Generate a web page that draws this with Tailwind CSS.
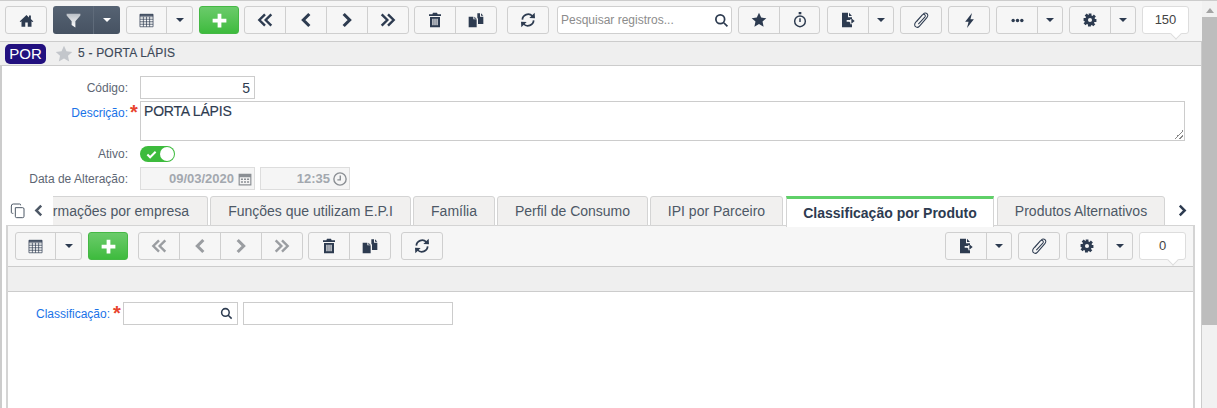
<!DOCTYPE html>
<html lang="pt-BR">
<head>
  <meta charset="UTF-8" />
  <title>Porta Lápis</title>
  <script src="https://cdn.jsdelivr.net/npm/@tailwindcss/browser@4"></script>
</head>
<body class="bg-white font-['Liberation_Sans',Arial,sans-serif] text-[#2d3b50] overflow-hidden">
  <!-- icon set -->
  <svg class="absolute w-0 h-0">
    <defs><linearGradient id="g-filter" x1="0" y1="0" x2="0" y2="1"><stop offset="0" stop-color="#b9bfc6"/><stop offset="1" stop-color="#ffffff"/></linearGradient></defs>
    <symbol id="i-home" viewBox="0 0 24 24"><path fill="currentColor" d="M12 3 1 13.500l1.500 1L4 13.200V22h6v-7h4v7h6v-8.800l1.500 1.300 1.500-1L19 9.700V4h-3v3z"/></symbol>
    <symbol id="i-filter" viewBox="0 0 24 24"><path fill="url(#g-filter)" d="M1 1h22v3l-8 9v10l-6-4v-6L1 4z"/></symbol>
    <symbol id="i-table" viewBox="0 0 24 24"><path fill="none" stroke="currentColor" stroke-width="1.100" d="M1.500 2h21v20h-21zM1.500 6h21M1.500 10h21M1.500 14h21M1.500 18h21M7 6v16M12 6v16M17 6v16"/><path fill="currentColor" d="M1.500 2h21v2.500h-21z"/></symbol>
    <symbol id="i-plus" viewBox="0 0 24 24"><path fill="currentColor" d="M9 1h6v8h8v6h-8v8H9v-8H1V9h8z"/></symbol>
    <symbol id="i-first" viewBox="0 0 24 24"><path fill="none" stroke="currentColor" stroke-width="3.600" d="M12 3.500 3.500 12l8.500 8.500M21.500 3.500 13 12l8.500 8.500"/></symbol>
    <symbol id="i-prev" viewBox="0 0 24 24"><path fill="none" stroke="currentColor" stroke-width="4.600" d="m17 3-9 9 9 9"/></symbol>
    <symbol id="i-next" viewBox="0 0 24 24"><path fill="none" stroke="currentColor" stroke-width="4.600" d="m7 3 9 9-9 9"/></symbol>
    <symbol id="i-last" viewBox="0 0 24 24"><path fill="none" stroke="currentColor" stroke-width="3.600" d="M2.500 3.500 11 12l-8.500 8.500M12 3.500l8.500 8.500-8.500 8.500"/></symbol>
    <symbol id="i-trash" viewBox="0 0 24 24"><path fill="currentColor" fill-rule="evenodd" d="M9 1h6l1 2.500h5v2.500H3V3.500h5zM4.500 7.500h15V23h-15zM8 10v10h1.800V10zm3.100 0v10h1.800V10zm3.100 0v10H16V10z"/></symbol>
    <symbol id="i-copy" viewBox="0 0 24 24"><path fill="currentColor" d="M1 7h7v4h5v12H1zM9.500 7l3.500 3h-3.500zM14 2h4v5h5v11h-8v-8l-1-1.500z"/><path fill="currentColor" d="m19.500 2 3.500 3.500h-3.500z"/></symbol>
    <symbol id="i-refresh" viewBox="0 0 24 24"><path fill="none" stroke="currentColor" stroke-width="2.600" d="M3.500 11.500A8.800 8.800 0 0 1 18.500 6M20.500 12.500A8.800 8.800 0 0 1 5.500 18"/><path fill="currentColor" d="m22 1 .5 8.500-8.500-.5zM2 23l-.5-8.500 8.500.5z"/></symbol>
    <symbol id="i-search" viewBox="0 0 24 24"><path fill="none" stroke="currentColor" stroke-width="2.800" d="M10 3a7 7 0 1 1 0 14 7 7 0 0 1 0-14zM15.200 15.200l6.300 6.300"/></symbol>
    <symbol id="i-star" viewBox="0 0 24 24"><path fill="currentColor" d="m12 1 3.300 7.400 7.700.8-5.700 5.200 1.600 7.600-6.900-3.900-6.900 3.900 1.600-7.600L1 9.200l7.700-.8z"/></symbol>
    <symbol id="i-timer" viewBox="0 0 24 24"><path fill="none" stroke="currentColor" stroke-width="2.200" d="M12 6a8 8 0 1 1 0 16 8 8 0 0 1 0-16zM12 9.500V15"/><path fill="currentColor" d="M10 0h4v3.500h-4z"/></symbol>
    <symbol id="i-export" viewBox="0 0 24 24"><path fill="currentColor" d="M3 1h9v7h6v2.500h-2.500V12H10v2.500h4l1.500 1.500v2.500H18V23H3z"/><path fill="currentColor" d="m13.500 1 4.500 5h-4.500zM17 9.500l5 4-5 4z"/></symbol>
    <symbol id="i-clip" viewBox="0 0 24 24"><path fill="none" stroke="currentColor" stroke-width="1.300" d="m6 13 8.500-9.500c2-2.200 5.500-.5 5.500 2 0 1-.5 2-1.200 2.800L9.500 19c-1.500 1.700-3.500 2-5 .8S3 16 4.500 14.300L13 5c1-1.100 2.500-1 3.300-.2s.8 2-.1 3L8 16.500"/></symbol>
    <symbol id="i-bolt" viewBox="0 0 24 24"><path fill="currentColor" d="M16 0 5 14h5.500L8 24l11-14h-5.500z"/></symbol>
    <symbol id="i-dots" viewBox="0 0 24 24"><circle cx="4" cy="12" r="3.200" fill="currentColor"/><circle cx="12" cy="12" r="3.200" fill="currentColor"/><circle cx="20" cy="12" r="3.200" fill="currentColor"/></symbol>
    <symbol id="i-gear" viewBox="0 0 24 24"><path fill="currentColor" fill-rule="evenodd" d="M9.500 1h5v3.200l1.800.8 2.300-2.300 3.500 3.500-2.300 2.300.8 1.800H23v5h-3.400l-.8 1.800 2.300 2.300-3.500 3.500-2.300-2.300-1.800.8V23h-5v-3.400l-1.800-.8-2.300 2.300-3.500-3.500 2.300-2.300-.8-1.800H1v-5h3.400l.8-1.800-2.300-2.300 3.500-3.500 2.300 2.300 1.800-.8zM12 8.500a3.500 3.500 0 1 0 0 7 3.500 3.500 0 0 0 0-7z"/></symbol>
    <symbol id="i-cal" viewBox="0 0 24 24"><path fill="currentColor" fill-rule="evenodd" d="M1 3h22v20H1zM3 9v12h18V9zM5 11h3.500v2.500H5zm5.300 0h3.500v2.500h-3.500zm5.200 0H19v2.500h-3.500zM5 16h3.500v2.500H5zm5.300 0h3.500v2.500h-3.500zm5.200 0H19v2.500h-3.500z"/></symbol>
    <symbol id="i-clock" viewBox="0 0 24 24"><path fill="none" stroke="currentColor" stroke-width="2.400" d="M12 1.500a10.500 10.500 0 1 1 0 21 10.500 10.500 0 0 1 0-21zM12.500 6v7.500H7.500"/></symbol>
    <symbol id="i-clone" viewBox="0 0 24 24"><path fill="none" stroke="currentColor" stroke-width="1.500" d="M8 7h11a2 2 0 0 1 2 2v11a2 2 0 0 1-2 2H10a2 2 0 0 1-2-2zM16 3.500V3a1.500 1.500 0 0 0-1.500-1.500H5A3 3 0 0 0 2 4.500V14A1.500 1.500 0 0 0 3.500 15.500H5"/></symbol>
  </svg>

  <div class="flex h-[408px]">
    <div class="w-[1202px] shrink-0 flex flex-col">
      <!-- main toolbar -->
      <div class="h-[41px] bg-[#f5f5f5] border-t border-[#cccccc] flex items-start pt-[5px] pl-[5px] w-[1217px]">
        <div class="flex h-[28px] border border-[#cfcfcf] rounded-[3px] bg-[#f6f6f6]">
          <button class="w-[40px] flex items-center justify-center"><svg class="w-[15px] h-[15px]"><use href="#i-home"/></svg></button>
        </div>
        <div class="flex h-[28px] ml-[6px] rounded-[3px] bg-gradient-to-b from-[#566373] to-[#465262] text-white">
          <button class="w-[41px] flex items-center justify-center border-r border-[#5f6b7a]"><svg class="w-[15px] h-[15px]"><use href="#i-filter"/></svg></button>
          <button class="w-[26px] flex items-center justify-center"><span class="border-x-[4px] border-t-[4px] border-x-transparent border-t-white"></span></button>
        </div>
        <div class="flex h-[28px] ml-[6px] border border-[#cfcfcf] rounded-[3px] bg-[#f6f6f6]">
          <button class="w-[40px] flex items-center justify-center border-r border-[#cfcfcf]"><svg class="w-[15px] h-[15px]"><use href="#i-table"/></svg></button>
          <button class="w-[25px] flex items-center justify-center"><span class="border-x-[4px] border-t-[4px] border-x-transparent border-t-[#2d3b50]"></span></button>
        </div>
        <button class="w-[40px] h-[28px] ml-[6px] rounded-[3px] bg-gradient-to-b from-[#6acb6a] to-[#3dbb3d] border border-[#45b845] text-white flex items-center justify-center"><svg class="w-[15px] h-[15px]"><use href="#i-plus"/></svg></button>
        <div class="flex h-[28px] ml-[5px] border border-[#cfcfcf] rounded-[3px] bg-[#f6f6f6]">
          <button class="w-[41px] flex items-center justify-center border-r border-[#cfcfcf]"><svg class="w-4 h-4"><use href="#i-first"/></svg></button>
          <button class="w-[41px] flex items-center justify-center border-r border-[#cfcfcf]"><svg class="w-4 h-4"><use href="#i-prev"/></svg></button>
          <button class="w-[41px] flex items-center justify-center border-r border-[#cfcfcf]"><svg class="w-4 h-4"><use href="#i-next"/></svg></button>
          <button class="w-[40px] flex items-center justify-center"><svg class="w-4 h-4"><use href="#i-last"/></svg></button>
        </div>
        <div class="flex h-[28px] ml-[5px] border border-[#cfcfcf] rounded-[3px] bg-[#f6f6f6]">
          <button class="w-[41px] flex items-center justify-center border-r border-[#cfcfcf]"><svg class="w-4 h-4"><use href="#i-trash"/></svg></button>
          <button class="w-[40px] flex items-center justify-center"><svg class="w-4 h-4"><use href="#i-copy"/></svg></button>
        </div>
        <button class="w-[42px] h-[28px] ml-[10px] border border-[#cfcfcf] rounded-[3px] bg-[#f6f6f6] flex items-center justify-center"><svg class="w-4 h-4"><use href="#i-refresh"/></svg></button>
        <div class="w-[175px] h-[28px] ml-[8px] border border-[#cfcfcf] rounded-[3px] bg-white flex items-center justify-between pl-[3px] pr-[2px]">
          <span class="text-[12px] text-[#8c8c8c]">Pesquisar registros...</span>
          <svg class="w-[15px] h-[15px]"><use href="#i-search"/></svg>
        </div>
        <div class="flex h-[28px] ml-[6px] border border-[#cfcfcf] rounded-[3px] bg-[#f6f6f6]">
          <button class="w-[41px] flex items-center justify-center border-r border-[#cfcfcf]"><svg class="w-4 h-4"><use href="#i-star"/></svg></button>
          <button class="w-[39px] flex items-center justify-center"><svg class="w-4 h-4"><use href="#i-timer"/></svg></button>
        </div>
        <div class="flex h-[28px] ml-[7px] border border-[#cfcfcf] rounded-[3px] bg-[#f6f6f6]">
          <button class="w-[41px] flex items-center justify-center border-r border-[#cfcfcf]"><svg class="w-4 h-4"><use href="#i-export"/></svg></button>
          <button class="w-[24px] flex items-center justify-center"><span class="border-x-[4px] border-t-[4px] border-x-transparent border-t-[#2d3b50]"></span></button>
        </div>
        <button class="w-[42px] h-[28px] ml-[6px] border border-[#cfcfcf] rounded-[3px] bg-[#f6f6f6] flex items-center justify-center"><svg class="w-[19px] h-[19px]"><use href="#i-clip"/></svg></button>
        <button class="w-[42px] h-[28px] ml-[6px] border border-[#cfcfcf] rounded-[3px] bg-[#f6f6f6] flex items-center justify-center"><svg class="w-[15px] h-[15px]"><use href="#i-bolt"/></svg></button>
        <div class="flex h-[28px] ml-[6px] border border-[#cfcfcf] rounded-[3px] bg-[#f6f6f6]">
          <button class="w-[41px] flex items-center justify-center border-r border-[#cfcfcf]"><svg class="w-[13px] h-[13px]"><use href="#i-dots"/></svg></button>
          <button class="w-[24px] flex items-center justify-center"><span class="border-x-[4px] border-t-[4px] border-x-transparent border-t-[#2d3b50]"></span></button>
        </div>
        <div class="flex h-[28px] ml-[6px] border border-[#cfcfcf] rounded-[3px] bg-[#f6f6f6]">
          <button class="w-[41px] flex items-center justify-center border-r border-[#cfcfcf]"><svg class="w-[14px] h-[14px]"><use href="#i-gear"/></svg></button>
          <button class="w-[24px] flex items-center justify-center"><span class="border-x-[4px] border-t-[4px] border-x-transparent border-t-[#2d3b50]"></span></button>
        </div>
        <div class="relative w-[47px] h-[28px] ml-[6px] border border-[#dddddd] rounded-[3px] bg-white flex items-center justify-center text-[13px] text-[#444] z-10">
          150
          <span class="absolute -bottom-[5px] right-[8px] w-2 h-2 bg-white border-r border-b border-[#dddddd] rotate-45"></span>
        </div>
      </div>

      <!-- record panel -->
      <div class="flex-1 border-l-2 border-r border-l-[#cccccc] border-r-[#cccccc] flex flex-col min-h-0">
        <div class="h-[25px] shrink-0 bg-[#efefef] border-y border-[#cccccc] flex items-center -ml-[2px] pl-[5px]">
          <span class="h-[20px] w-[41px] rounded-[5px] bg-[#22107f] text-white text-[15px] leading-[20px] text-center">POR</span>
          <svg class="w-[18px] h-[18px] ml-[9px] text-[#c3c6cb]"><use href="#i-star"/></svg>
          <span class="ml-[5px] -mt-[1px] text-[12px] tracking-[0.2px] text-[#3c4858] [-webkit-text-stroke:0.15px_#3c4858]">5 - PORTA LÁPIS</span>
        </div>

        <!-- form -->
        <div class="h-[130px] shrink-0 pt-[10px] text-[12px]">
          <div class="flex h-[23px] items-center">
            <label class="w-[126px] text-right text-[#5d6673]">Código:</label>
            <input class="ml-[12px] w-[115px] h-[23px] border border-[#cccccc] text-right pr-[4px] text-[14px] text-[#2d3b50]" value="5" />
          </div>
          <div class="flex mt-[2px] h-[40px]">
            <label class="w-[126px] text-right text-[#1a73e8] pt-[3px]">Descrição:</label>
            <span class="w-[12px] pl-[2px] text-[#e8442e] text-[20px] font-bold leading-[22px]">*</span>
            <div class="w-[1045px] h-[40px] border border-[#cccccc] px-[3px] text-[14px] leading-[18px] tracking-[-0.2px] [-webkit-text-stroke:0.15px_#2d3b50] relative">
              PORTA LÁPIS
              <span class="absolute right-[1px] bottom-[1px] w-[9px] h-[9px] bg-[linear-gradient(135deg,transparent_50%,#888_50%,#888_60%,transparent_60%,transparent_75%,#888_75%,#888_85%,transparent_85%)]"></span>
            </div>
          </div>
          <div class="flex items-center h-[16px] mt-[5px]">
            <label class="w-[126px] text-right text-[#5d6673]">Ativo:</label>
            <span class="ml-[12px] w-[35px] h-[16px] rounded-full bg-[#3dbb3d] relative flex items-center pl-[6px]">
              <svg class="w-[11px] h-[11px] text-white" viewBox="0 0 12 12"><path fill="none" stroke="currentColor" stroke-width="2.200" d="m1.500 6 3 3 6-6"/></svg>
              <span class="absolute right-[1px] top-[1px] w-[14px] h-[14px] bg-white rounded-full"></span>
            </span>
          </div>
          <div class="flex items-center h-[23px] mt-[5px]">
            <label class="w-[126px] text-right text-[#5d6673]">Data de Alteração:</label>
            <div class="ml-[12px] w-[115px] h-[23px] border border-[#dddddd] bg-[#f5f5f5] flex items-center justify-end pr-[2px] gap-[4px] text-[13px] font-bold text-[#a3a8af]">09/03/2020<svg class="w-[14px] h-[14px] text-[#8b8f94]"><use href="#i-cal"/></svg></div>
            <div class="ml-[5px] w-[90px] h-[23px] border border-[#dddddd] bg-[#f5f5f5] flex items-center justify-end pr-[2px] gap-[3px] text-[13px] font-bold text-[#a3a8af]">12:35<svg class="w-[14px] h-[14px] text-[#8b8f94]"><use href="#i-clock"/></svg></div>
          </div>
        </div>

        <!-- tabs -->
        <div class="h-[29px] shrink-0 flex items-start relative text-[14px] text-[#4d5866]">
          <svg class="w-[16px] h-[16px] ml-[8px] mt-[7px]"><use href="#i-clone"/></svg>
          <svg class="w-[13px] h-[15px] ml-[6px] mt-[7px]"><use href="#i-prev"/></svg>
          <div class="ml-[8px] w-[155px] h-[30px] bg-[#f1f0ef] border border-l-0 border-[#d4d4d4] rounded-tr-[3px] flex items-center justify-end pr-[18px] overflow-hidden whitespace-nowrap"><span class="shrink-0">Informações por empresa</span></div>
          <div class="ml-[2px] w-[201px] h-[30px] bg-[#f1f0ef] border border-[#d4d4d4] rounded-t-[3px] flex items-center justify-center whitespace-nowrap">Funções que utilizam E.P.I</div>
          <div class="ml-[2px] w-[82px] h-[30px] bg-[#f1f0ef] border border-[#d4d4d4] rounded-t-[3px] flex items-center justify-center">Família</div>
          <div class="ml-[2px] w-[151px] h-[30px] bg-[#f1f0ef] border border-[#d4d4d4] rounded-t-[3px] flex items-center justify-center whitespace-nowrap">Perfil de Consumo</div>
          <div class="ml-[2px] w-[133px] h-[30px] bg-[#f1f0ef] border border-[#d4d4d4] rounded-t-[3px] flex items-center justify-center whitespace-nowrap">IPI por Parceiro</div>
          <div class="ml-[3px] w-[208px] h-[31px] bg-white border-x border-[#d4d4d4] border-t-[3px] border-t-[#5fd068] flex items-center justify-center font-bold text-[#2d3b50] whitespace-nowrap relative z-10">Classificação por Produto</div>
          <div class="ml-[3px] w-[168px] h-[30px] bg-[#f1f0ef] border border-[#d4d4d4] rounded-t-[3px] flex items-center justify-center whitespace-nowrap">Produtos Alternativos</div>
          <svg class="w-[13px] h-[15px] ml-[11px] mt-[7px] text-[#2d3b50]"><use href="#i-next"/></svg>
        </div>

        <!-- inner panel -->
        <div class="flex-1 ml-[4px] mr-[6px] border-x-2 border-[#d4d4d4] border-t border-t-[#d4d4d4] flex flex-col min-h-0">
          <div class="h-[40px] shrink-0 bg-[#f6f6f6] flex items-start pt-[6px] pl-[7px]">
            <div class="flex h-[28px] border border-[#cfcfcf] rounded-[3px] bg-[#f6f6f6]">
              <button class="w-[40px] flex items-center justify-center border-r border-[#cfcfcf]"><svg class="w-[15px] h-[15px]"><use href="#i-table"/></svg></button>
              <button class="w-[25px] flex items-center justify-center"><span class="border-x-[4px] border-t-[4px] border-x-transparent border-t-[#2d3b50]"></span></button>
            </div>
            <button class="w-[40px] h-[28px] ml-[6px] rounded-[3px] bg-gradient-to-b from-[#6acb6a] to-[#3dbb3d] border border-[#45b845] text-white flex items-center justify-center"><svg class="w-[15px] h-[15px]"><use href="#i-plus"/></svg></button>
            <div class="flex h-[28px] ml-[10px] border border-[#cfcfcf] rounded-[3px] bg-[#f6f6f6] text-[#9a9da1]">
              <button class="w-[41px] flex items-center justify-center border-r border-[#cfcfcf]"><svg class="w-4 h-4"><use href="#i-first"/></svg></button>
              <button class="w-[41px] flex items-center justify-center border-r border-[#cfcfcf]"><svg class="w-4 h-4"><use href="#i-prev"/></svg></button>
              <button class="w-[41px] flex items-center justify-center border-r border-[#cfcfcf]"><svg class="w-4 h-4"><use href="#i-next"/></svg></button>
              <button class="w-[40px] flex items-center justify-center"><svg class="w-4 h-4"><use href="#i-last"/></svg></button>
            </div>
            <div class="flex h-[28px] ml-[5px] border border-[#cfcfcf] rounded-[3px] bg-[#f6f6f6]">
              <button class="w-[41px] flex items-center justify-center border-r border-[#cfcfcf]"><svg class="w-4 h-4"><use href="#i-trash"/></svg></button>
              <button class="w-[40px] flex items-center justify-center"><svg class="w-4 h-4"><use href="#i-copy"/></svg></button>
            </div>
            <button class="w-[42px] h-[28px] ml-[10px] border border-[#cfcfcf] rounded-[3px] bg-[#f6f6f6] flex items-center justify-center"><svg class="w-4 h-4"><use href="#i-refresh"/></svg></button>
            <div class="flex-1"></div>
            <div class="flex h-[28px] border border-[#cfcfcf] rounded-[3px] bg-[#f6f6f6]">
              <button class="w-[41px] flex items-center justify-center border-r border-[#cfcfcf]"><svg class="w-4 h-4"><use href="#i-export"/></svg></button>
              <button class="w-[24px] flex items-center justify-center"><span class="border-x-[4px] border-t-[4px] border-x-transparent border-t-[#2d3b50]"></span></button>
            </div>
            <button class="w-[42px] h-[28px] ml-[6px] border border-[#cfcfcf] rounded-[3px] bg-[#f6f6f6] flex items-center justify-center"><svg class="w-[19px] h-[19px]"><use href="#i-clip"/></svg></button>
            <div class="flex h-[28px] ml-[6px] border border-[#cfcfcf] rounded-[3px] bg-[#f6f6f6]">
              <button class="w-[41px] flex items-center justify-center border-r border-[#cfcfcf]"><svg class="w-[14px] h-[14px]"><use href="#i-gear"/></svg></button>
              <button class="w-[24px] flex items-center justify-center"><span class="border-x-[4px] border-t-[4px] border-x-transparent border-t-[#2d3b50]"></span></button>
            </div>
            <div class="relative w-[47px] h-[28px] ml-[6px] mr-[7px] border border-[#dddddd] rounded-[3px] bg-white flex items-center justify-center text-[13px] text-[#444] z-10">
              0
              <span class="absolute -bottom-[5px] right-[8px] w-2 h-2 bg-white border-r border-b border-[#dddddd] rotate-45"></span>
            </div>
          </div>
          <div class="h-[26px] shrink-0 bg-[#efefef] border-y border-[#cccccc]"></div>
          <div class="flex-1 bg-white pt-[10px] text-[12px]">
            <div class="flex items-center h-[23px]">
              <label class="w-[102px] text-right text-[#1a73e8]">Classificação:</label>
              <span class="w-[13px] pl-[3px] text-[#e8442e] text-[20px] font-bold leading-[22px] self-start">*</span>
              <div class="w-[115px] h-[23px] border border-[#cccccc] flex items-center justify-end pr-[4px]"><svg class="w-[13px] h-[13px]"><use href="#i-search"/></svg></div>
              <div class="ml-[5px] w-[210px] h-[23px] border border-[#cccccc]"></div>
            </div>
          </div>
        </div>
      </div>
    </div>

    <!-- scrollbar -->
    <div class="w-[15px] shrink-0 bg-[#f1f1f1] mt-[1px] flex flex-col items-center">
      <span class="mt-[7px] border-x-[4px] border-b-[5px] border-x-transparent border-b-[#a3a3a3]"></span>
      <div class="mt-[4px] w-full h-[308px] bg-[#bdbdbd]"></div>
    </div>
  </div>
</body>
</html>
